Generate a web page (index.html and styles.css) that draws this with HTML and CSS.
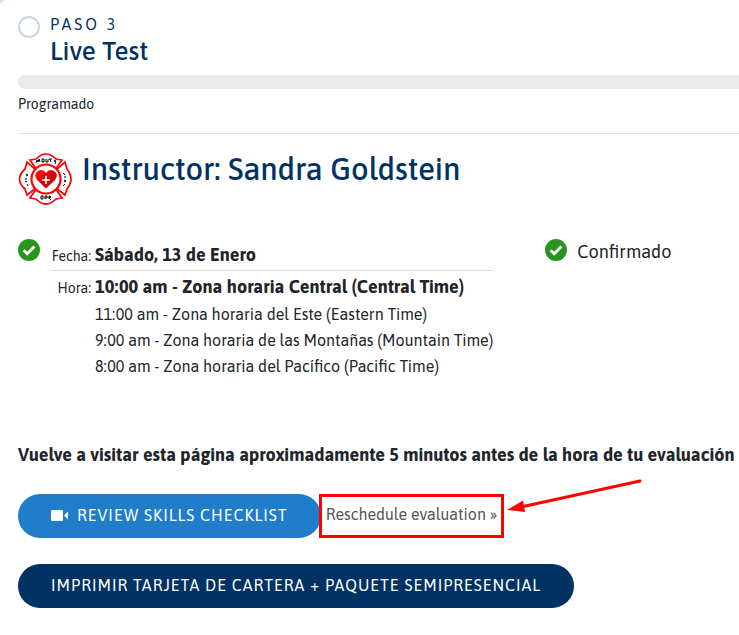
FILE: index.html
```html
<!DOCTYPE html>
<html lang="es">
<head>
<meta charset="utf-8">
<meta name="viewport" content="width=device-width, initial-scale=1">
<title>Live Test</title>
<link rel="stylesheet" href="styles.css">
</head>
<body>
<main class="card">
  <header class="step">
    <span class="step-marker"></span>
    <div>
      <p class="step-number">PASO 3</p>
      <h1 class="step-title">Live Test</h1>
    </div>
  </header>
  <div class="progress"></div>
  <p class="status">Programado</p>

  <section class="instructor">
    <svg class="badge" viewBox="0 0 54 54" aria-hidden="true">
      <defs>
        <linearGradient id="heart" x1="0" y1="0" x2="1" y2="1">
          <stop offset="0" stop-color="#ff1010"/>
          <stop offset="1" stop-color="#b00000"/>
        </linearGradient>
      </defs>
      <g fill="#fff" stroke="#ff0000" stroke-width="1.7" stroke-linejoin="miter">
        <path d="M12 8L18 7Q28 -3 38 7L44 8L37 18Q28 10 19 18Z"/>
        <path d="M12 46L18 47Q28 57 38 47L44 46L37 36Q28 44 19 36Z"/>
        <path d="M9 10L7 17Q-4 27 7 37L9 43L18 36Q11 27 18 18Z"/>
        <path d="M47 10L49 17Q57 27 49 37L47 43L38 36Q45 27 38 18Z"/>
        <circle cx="28" cy="27" r="14.5" stroke-width="2.2"/>
      </g>
      <path d="M28 36.500L19 28Q15 22 20 19Q25 16.500 28 21Q31 16.500 36 19Q41 22 37 28Z" fill="url(#heart)"/>
      <path d="M28 24v8M24 28h8" stroke="#fff" stroke-width="1.6"/>
      <g fill="none" stroke="#000" stroke-width="1">
        <path d="M18 11l1-3 1 2 1-3 1 3M24 7h2v3h-2zM28 7v3h2v-3M32 7l1 3M31 7h3M38 8l-2 1 2 1-1 2"/>
        <path d="M23 44v3h2v-3zM27 47v-3h2v2h-2M31 47v-3l2 1-2 1 2 2"/>
        <path d="M8 22l2 1-2 1M7 27h2M7 29l2 1M9 32l1 2"/>
        <path d="M45 21l2 2M46 25h2M46 28l2 1-2 1M47 32l-2 2"/>
      </g>
    </svg>
    <h2 class="instructor-name">Instructor: Sandra Goldstein</h2>
  </section>

  <section class="appointment">
    <div class="schedule">
      <svg class="check" viewBox="0 0 22 22" aria-hidden="true"><circle cx="11" cy="11" r="11" fill="#28961e"/><path d="M5.7 11.3l3.5 3.5 7.2-7.2" fill="none" stroke="#fff" stroke-width="2.8"/></svg>
      <dl class="details">
        <div class="row row-date"><dt>Fecha:</dt><dd><strong>Sábado, 13 de Enero</strong></dd></div>
        <div class="row"><dt>Hora:</dt><dd><strong>10:00 am - Zona horaria Central (Central Time)</strong></dd></div>
        <div class="row row-zone"><dd>11:00 am - Zona horaria del Este (Eastern Time)</dd></div>
        <div class="row row-zone"><dd>9:00 am - Zona horaria de las Montañas (Mountain Time)</dd></div>
        <div class="row row-zone"><dd>8:00 am - Zona horaria del Pacífico (Pacific Time)</dd></div>
      </dl>
    </div>
    <div class="confirmed">
      <svg class="check" viewBox="0 0 22 22" aria-hidden="true"><circle cx="11" cy="11" r="11" fill="#28961e"/><path d="M5.7 11.3l3.5 3.5 7.2-7.2" fill="none" stroke="#fff" stroke-width="2.8"/></svg>
      <span>Confirmado</span>
    </div>
  </section>

  <p class="notice">Vuelve a visitar esta página aproximadamente 5 minutos antes de la hora de tu evaluación</p>

  <div class="actions">
    <button class="button button-review" type="button">
      <svg class="video" viewBox="0 0 18 12" aria-hidden="true"><rect y="1" width="12" height="11" rx="1" fill="#fff"/><path d="M13 6.500l4-4v8z" fill="#fff"/></svg>
      REVIEW SKILLS CHECKLIST
    </button>
    <span class="highlight">
      <a class="reschedule" href="#">Reschedule evaluation »</a>
      <svg class="arrow" viewBox="0 0 138 36" aria-hidden="true"><path d="M135 3L16 29" stroke="#f00" stroke-width="3" stroke-linecap="round"/><path d="M2 32L18 22.5L20 34Z" fill="#f00"/></svg>
    </span>
  </div>
  <div class="actions">
    <button class="button button-print" type="button">IMPRIMIR TARJETA DE CARTERA + PAQUETE SEMIPRESENCIAL</button>
  </div>
</main>
</body>
</html>
```
FILE: styles.css
```css
* { box-sizing: border-box; }

body {
  margin: 0;
  background: #c8dcf4;
  color: #212529;
  font-family: Asap, "Noto Sans", Lato, sans-serif;
  font-size: 16px;
}

h1, h2, p, dl, dd { margin: 0; }

.card {
  min-height: 100vh;
  padding: 14px 0 24px 18px;
  background: #fff;
  border-top-left-radius: 6px;
}

.step { display: flex; gap: 10px; }

.step-marker {
  width: 22px;
  height: 22px;
  margin-top: 2px;
  border: 2px solid #c8d5e3;
  border-radius: 50%;
}

.step-number {
  color: #003263;
  font-size: 16px;
  line-height: 20px;
  letter-spacing: 3px;
}

.step-title {
  color: #003263;
  font-size: 26px;
  font-weight: 500;
  line-height: 34px;
}

.progress {
  height: 14px;
  margin-top: 7px;
  border-radius: 7px 0 0 7px;
  background: #e8ebee;
}

.status {
  padding: 5px 0 19px;
  border-bottom: 1px solid #dfe0e1;
  font-size: 14px;
  line-height: 20px;
}

.instructor {
  display: flex;
  gap: 10px;
  margin-top: 18px;
}

.badge { width: 54px; height: 54px; }

.instructor-name {
  color: #003263;
  font-size: 31px;
  font-weight: 500;
  line-height: 34px;
}

.appointment {
  display: grid;
  grid-template-columns: 73% 1fr;
  margin-top: 33px;
}

.schedule {
  display: flex;
  gap: 10px;
  padding-right: 53px;
}

.check { flex: none; width: 22px; height: 22px; }

.details { flex: 1; margin-top: 3px; }

.row {
  display: grid;
  grid-template-columns: 41px 1fr;
  column-gap: 4px;
  align-items: baseline;
  line-height: 26px;
  white-space: nowrap;
}

.row dt { font-size: 14px; text-align: right; }
.row dd { grid-column: 2; }
.row strong { font-size: 18px; font-weight: 700; }

.row-date {
  margin-bottom: 3px;
  padding-bottom: 1px;
  border-bottom: 1px solid #d8d9da;
}

.confirmed {
  display: flex;
  gap: 10px;
  padding-left: 1px;
  font-size: 18px;
  line-height: 26px;
}

.notice {
  margin-top: 63px;
  font-size: 18px;
  font-weight: 700;
  line-height: 26px;
}

.actions {
  display: flex;
  align-items: center;
  margin-top: 26px;
}

.button {
  display: flex;
  align-items: center;
  gap: 8px;
  height: 44px;
  padding: 0 33px 3px;
  border: 0;
  border-radius: 22px;
  color: #fff;
  font-family: inherit;
  font-size: 16px;
  letter-spacing: 1px;
  white-space: nowrap;
}

.button-review { background: #207dca; }
.button-print { background: #003263; }

.video { width: 18px; height: 12px; }

.highlight {
  position: relative;
  margin-left: -2px;
  padding: 6px 4px 10px;
  border: 3px solid #f00;
}

.reschedule {
  color: #555;
  line-height: 22px;
  text-decoration: none;
  white-space: nowrap;
}

.arrow {
  position: absolute;
  left: 100%;
  top: -19px;
  width: 138px;
  height: 36px;
  margin-left: 4px;
}
```
